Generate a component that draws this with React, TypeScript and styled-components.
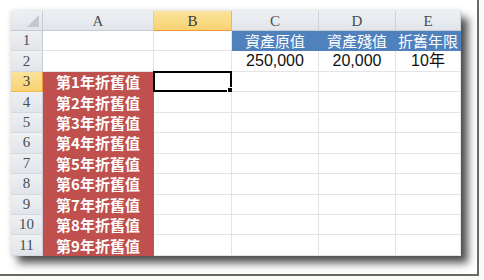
import React from 'react';
import styled, { createGlobalStyle } from 'styled-components';

const GlobalStyle = createGlobalStyle`
  body {
    margin: 0;
    background: #fafaf8;
  }
`;

const Frame = styled.div`
  box-sizing: border-box;
  width: 479px;
  height: 276px;
  padding: 11px 0 0 11px;
  background: #ffffff;
  border-right: 2px solid #686c60;
  border-bottom: 2px solid #686c60;
`;

const Sheet = styled.div`
  display: grid;
  grid-template-columns: 32px 111px 78px 87px 77px 65px;
  grid-template-rows: 20px repeat(11, 20.45px);
  width: 450px;
  background: #ffffff;
  box-shadow: 0 0 5px rgba(0, 0, 0, 0.15), 7px 7px 8px rgba(40, 40, 40, 0.8);
`;

const Head = styled.div<{ $active?: boolean }>`
  box-sizing: border-box;
  display: flex;
  align-items: center;
  justify-content: center;
  font-family: 'Liberation Serif', 'DejaVu Serif', serif;
  font-size: 15px;
  line-height: 1;
  color: ${(p) => (p.$active ? '#3a3a3a' : '#4a4d52')};
  background: ${(p) =>
    p.$active
      ? 'linear-gradient(#fbe39c, #f8d371)'
      : 'linear-gradient(#eef0f3, #e1e5ea)'};
`;

const Corner = styled(Head)`
  position: relative;
  border-right: 1px solid #c6ccd4;
  border-bottom: 1px solid #c6ccd4;
`;

const ColHead = styled(Head)`
  border-right: 1px solid ${(p) => (p.$active ? '#f0b850' : '#cdd2d9')};
  border-bottom: 1px solid ${(p) => (p.$active ? '#f29a3a' : '#c6ccd4')};
  padding-top: 1px;
`;

const RowHead = styled(Head)`
  border-right: 1px solid ${(p) => (p.$active ? '#f29a3a' : '#c6ccd4')};
  border-bottom: 1px solid ${(p) => (p.$active ? '#f0b850' : '#d4d9df')};
`;

type Tone = 'blue' | 'red' | 'plain';

const toneBg: Record<Tone, string> = {
  blue: '#4f81bd',
  red: '#c0504d',
  plain: '#ffffff',
};

const Cell = styled.div<{ $tone: Tone }>`
  position: relative;
  box-sizing: border-box;
  display: flex;
  align-items: center;
  justify-content: center;
  background: ${(p) => toneBg[p.$tone]};
  border-right: 1px solid ${(p) => (p.$tone === 'plain' ? '#e2e4e6' : toneBg[p.$tone])};
  border-bottom: 1px solid ${(p) => (p.$tone === 'plain' ? '#e2e4e6' : toneBg[p.$tone])};
  color: ${(p) => (p.$tone === 'plain' ? '#111111' : '#ffffff')};
  font-family: 'Noto Sans CJK TC', 'Liberation Sans', sans-serif;
  font-size: 15px;
  font-weight: ${(p) => (p.$tone === 'red' ? 700 : 400)};
  white-space: nowrap;
  line-height: 1;
`;

const Num = styled.span`
  font-family: 'Liberation Sans', 'Noto Sans CJK TC', sans-serif;
  font-size: 16px;
`;

const SelectBox = styled.span`
  position: absolute;
  top: -1px;
  left: -1px;
  right: -1px;
  bottom: -1px;
  border: 2px solid #000000;
`;

const Handle = styled.span`
  position: absolute;
  right: -4px;
  bottom: -4px;
  width: 5px;
  height: 5px;
  background: #000000;
  border: 1px solid #ffffff;
`;

const cols = ['A', 'B', 'C', 'D', 'E'];
const activeCol = 'B';
const activeRow = 3;

type CellData = { text?: string; tone?: Tone; num?: boolean };

const rows: CellData[][] = [
  [{}, {}, { text: '資產原值', tone: 'blue' }, { text: '資產殘值', tone: 'blue' }, { text: '折舊年限', tone: 'blue' }],
  [{}, {}, { text: '250,000', num: true }, { text: '20,000', num: true }, { text: '10年', num: true }],
  ...Array.from({ length: 9 }, (_, i) => [
    { text: `第${i + 1}年折舊值`, tone: 'red' as Tone },
    {},
    {},
    {},
    {},
  ]),
];

function CornerMark() {
  return (
    <svg width="12" height="12" style={{ position: 'absolute', right: 3, bottom: 3 }}>
      <polygon points="12,0 12,12 0,12" fill="#c3c8cf" />
    </svg>
  );
}

export default function App() {
  return (
    <>
      <GlobalStyle />
      <Frame>
        <Sheet>
          <Corner>
            <CornerMark />
          </Corner>
          {cols.map((c) => (
            <ColHead key={c} $active={c === activeCol}>
              {c}
            </ColHead>
          ))}
          {rows.map((row, r) => (
            <React.Fragment key={r}>
              <RowHead $active={r + 1 === activeRow}>{r + 1}</RowHead>
              {row.map((cell, c) => {
                const selected = r + 1 === activeRow && cols[c] === activeCol;
                return (
                  <Cell key={c} $tone={cell.tone ?? 'plain'}>
                    {cell.num ? <Num>{cell.text}</Num> : cell.text}
                    {selected && (
                      <SelectBox>
                        <Handle />
                      </SelectBox>
                    )}
                  </Cell>
                );
              })}
            </React.Fragment>
          ))}
        </Sheet>
      </Frame>
    </>
  );
}
